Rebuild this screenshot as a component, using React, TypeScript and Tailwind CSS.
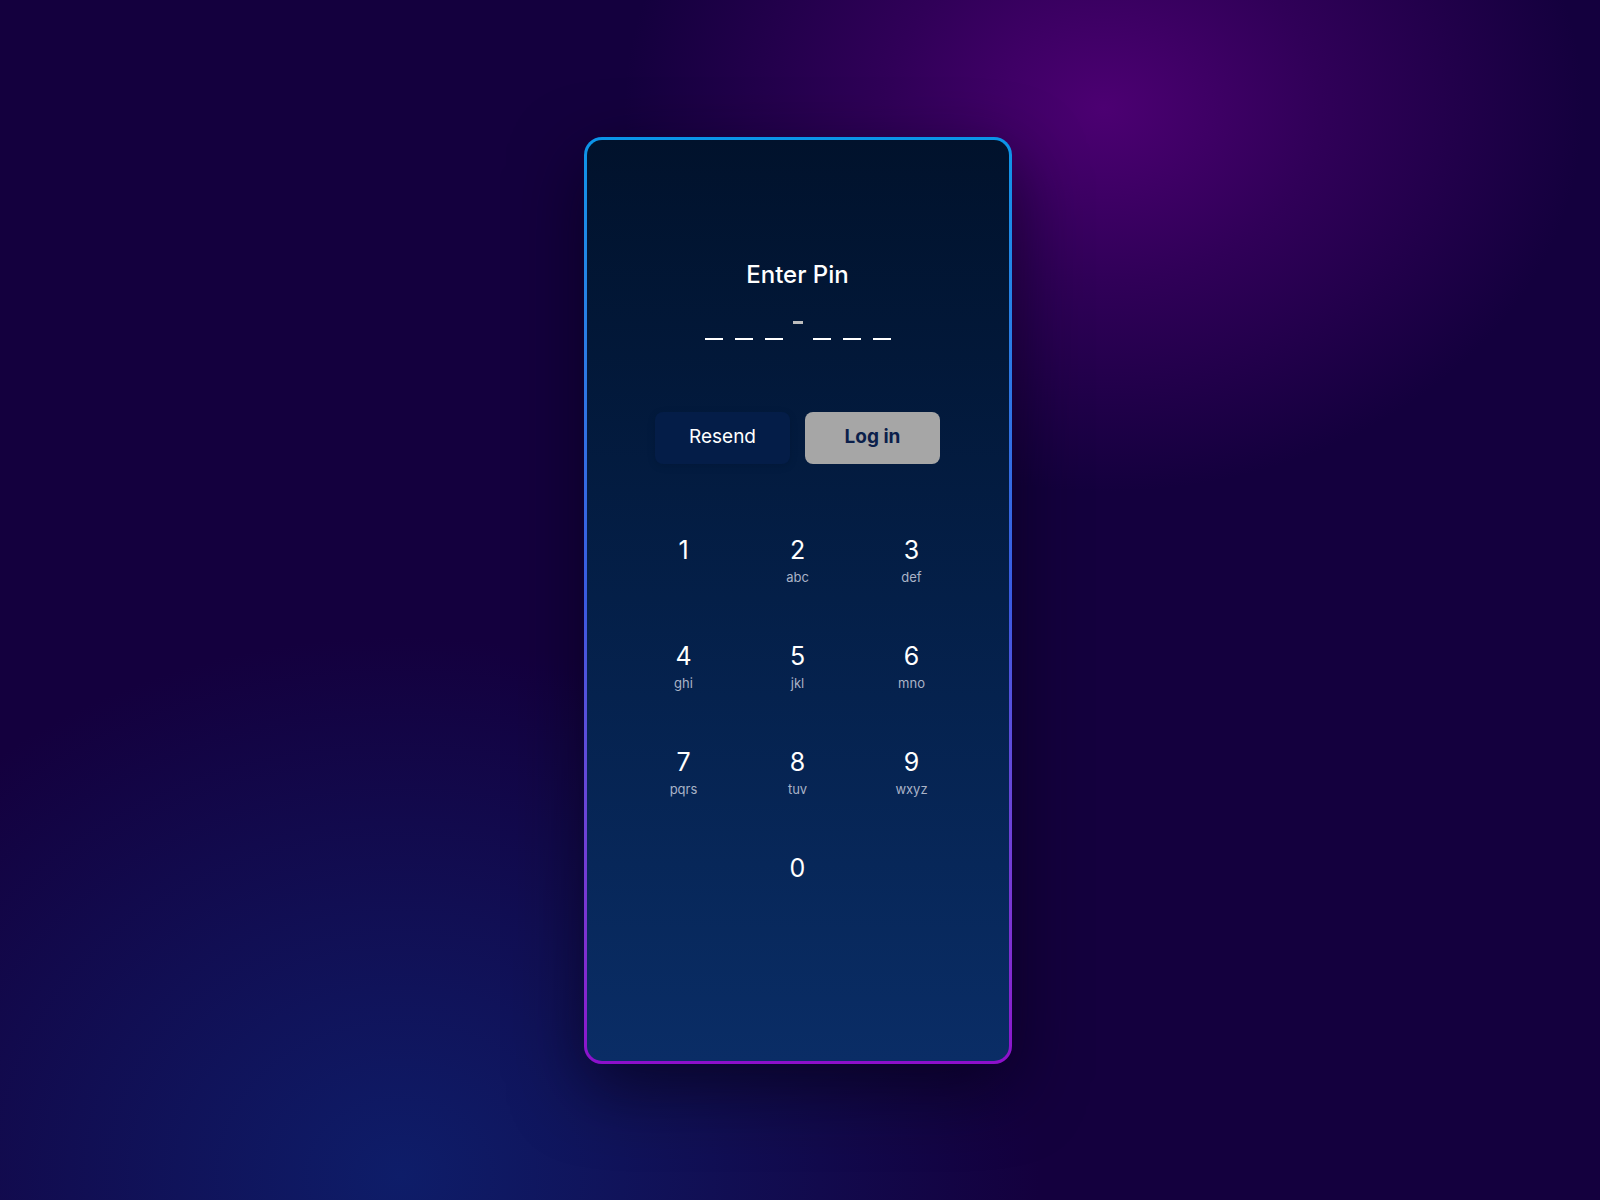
const keys: { n: string; l?: string }[] = [
  { n: '1' },
  { n: '2', l: 'abc' },
  { n: '3', l: 'def' },
  { n: '4', l: 'ghi' },
  { n: '5', l: 'jkl' },
  { n: '6', l: 'mno' },
  { n: '7', l: 'pqrs' },
  { n: '8', l: 'tuv' },
  { n: '9', l: 'wxyz' },
];

function Key({ n, l }: { n: string; l?: string }) {
  return (
    <button className="flex h-[106px] flex-col items-center pt-[8px] text-white">
      <span className="text-[25px] leading-[32px]">{n}</span>
      {l && <span className="mt-[3px] text-[13px] leading-[16px] text-[#aab3c7]">{l}</span>}
    </button>
  );
}

function PinSlots() {
  return (
    <div className="flex items-end justify-center">
      <div className="flex gap-[12px]">
        {[0, 1, 2].map((i) => (
          <div key={i} className="h-[2px] w-[18px] bg-white" />
        ))}
      </div>
      <div className="mx-[10px] mb-[16px] h-[3px] w-[10px] bg-[#bdbdbd]" />
      <div className="flex gap-[12px]">
        {[0, 1, 2].map((i) => (
          <div key={i} className="h-[2px] w-[18px] bg-white" />
        ))}
      </div>
    </div>
  );
}

export default function App() {
  return (
    <div
      className="flex min-h-[1200px] w-full items-center justify-center bg-[#14003e] bg-[image:radial-gradient(ellipse_30%_32%_at_69%_9%,#4c0072_0%,rgba(76,0,114,0.5)_45%,transparent_100%),radial-gradient(ellipse_40%_45%_at_25%_98%,#0e1d69_0%,rgba(14,29,105,0.5)_50%,transparent_100%)] pr-[5px]"
      style={{ fontFamily: 'Inter, "Noto Sans", sans-serif' }}
    >
      <div className="rounded-[18px] bg-gradient-to-b from-[#0a95e8] via-[#3a5ae0] to-[#8d0fcb] p-[3px] shadow-[0_24px_70px_rgba(5,0,20,0.65)]">
        <div className="flex h-[921px] w-[422px] flex-col items-center rounded-[15px] bg-gradient-to-b from-[#01122c] to-[#0a2d66] pt-[117px]">
          <h1 className="text-[24px] font-medium leading-[36px] text-white">Enter Pin</h1>

          <div className="mt-[28px]">
            <PinSlots />
          </div>

          <div className="mt-[72px] flex gap-[15px]">
            <button className="h-[52px] w-[135px] rounded-[8px] bg-[#041d48] text-[19px] text-white shadow-[0_2px_8px_rgba(0,0,0,0.12)]">
              Resend
            </button>
            <button className="h-[52px] w-[135px] rounded-[8px] bg-[#a6a6a6] text-[19px] font-bold text-[#0b1f4b]">
              Log in
            </button>
          </div>

          <div className="mt-[62px] grid w-[342px] grid-cols-3">
            {keys.map((k) => (
              <Key key={k.n} n={k.n} l={k.l} />
            ))}
            <div />
            <Key n="0" />
          </div>
        </div>
      </div>
    </div>
  );
}
